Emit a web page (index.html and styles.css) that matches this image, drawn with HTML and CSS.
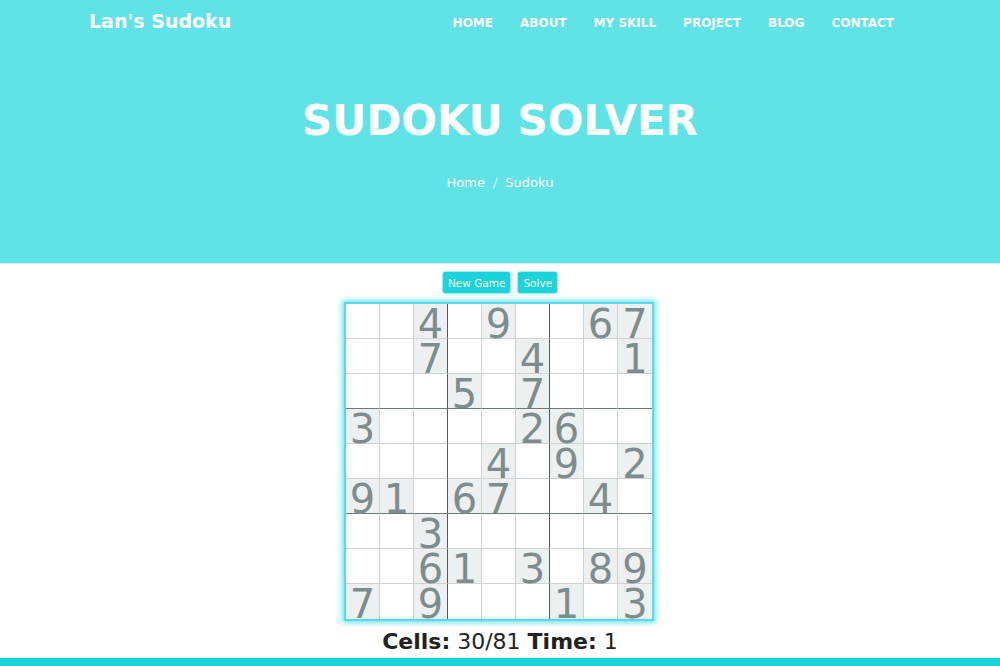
FILE: index.html
```html
<!DOCTYPE html>
<html>
<head>
<meta charset="utf-8">
<title>Lan's Sudoku</title>
<link rel="stylesheet" href="styles.css">
</head>
<body>
<header class="hero">
  <nav class="navbar">
    <div class="brand">Lan's Sudoku</div>
    <ul class="menu">
      <li><a href="#">HOME</a></li>
      <li><a href="#">ABOUT</a></li>
      <li><a href="#">MY SKILL</a></li>
      <li><a href="#">PROJECT</a></li>
      <li><a href="#">BLOG</a></li>
      <li><a href="#">CONTACT</a></li>
    </ul>
  </nav>
  <h1 class="title">SUDOKU SOLVER</h1>
  <div class="crumbs"><span>Home</span><span class="sep">/</span><span>Sudoku</span></div>
</header>
<main class="game">
  <div class="actions">
    <button class="btn">New Game</button>
    <button class="btn">Solve</button>
  </div>
  <div class="board" id="board"></div>
  <div class="stats"><b>Cells:</b> 30/81 <b>Time:</b> 1</div>
</main>
<div class="footer-bar"></div>
<script>
var rows = [
  "..4.9..67",
  "..7..4..1",
  "...5.7...",
  "3....26..",
  "....4.9.2",
  "91.67..4.",
  "..3......",
  "..61.3.89",
  "7.9...1.3"
];
var board = document.getElementById('board');
rows.forEach(function (r, ri) {
  r.split('').forEach(function (ch, ci) {
    var c = document.createElement('div');
    c.className = 'cell';
    if (ci === 2 || ci === 5) c.className += ' bx';
    if (ci === 8) c.className += ' lastc';
    if (ri === 2 || ri === 5) c.className += ' by';
    if (ri === 8) c.className += ' lastr';
    if (ch !== '.') { c.className += ' given'; c.textContent = ch; }
    board.appendChild(c);
  });
});
</script>
</body>
</html>
```
FILE: styles.css
```css
html, body {
  margin: 0;
  padding: 0;
  background: #ffffff;
  font-family: "DejaVu Sans", Verdana, sans-serif;
}
.hero {
  background: #60e3e6;
  height: 264px;
  border-bottom: 1px solid #c9f4f6;
  box-sizing: border-box;
}
.navbar {
  width: 822px;
  margin: 0 auto;
  height: 42px;
  display: flex;
  align-items: center;
  justify-content: space-between;
}
.brand {
  color: #fff;
  font-weight: bold;
  font-size: 19px;
}
.menu {
  list-style: none;
  margin: 0;
  padding: 0;
  display: flex;
  gap: 27px;
  margin-right: 17px;
}
.menu a {
  color: #fff;
  text-decoration: none;
  font-weight: bold;
  font-size: 12px;
}
.title {
  margin: 54px 0 0 0;
  text-align: center;
  color: #fff;
  font-size: 42px;
  font-weight: bold;
  line-height: 50px;
}
.crumbs {
  margin-top: 29px;
  text-align: center;
  color: #fff;
  font-size: 13px;
}
.crumbs .sep {
  color: #d9f8f9;
  margin: 0 8px;
}
.game {
  display: flex;
  flex-direction: column;
  align-items: center;
  padding-top: 7px;
}
.actions {
  display: flex;
  gap: 6px;
  margin-bottom: 8px;
}
.btn {
  background: #1bd3da;
  color: #fff;
  border: 1px solid #a8eef1;
  border-radius: 3px;
  height: 23px;
  padding: 0 5px;
  font-family: "DejaVu Sans", Verdana, sans-serif;
  font-size: 10.5px;
}
.board {
  display: grid;
  grid-template-columns: repeat(9, 34px);
  grid-auto-rows: 35px;
  border: 2px solid #5bd9e6;
  box-shadow: 0 0 5px 2px #6fe6f0;
  margin-left: -2px;
}
.cell {
  box-sizing: border-box;
  border-right: 1px solid #cfd3d3;
  border-bottom: 1px solid #cfd3d3;
  height: 35px;
  text-align: center;
  font-size: 40px;
  line-height: 41px;
  color: #7f8c8d;
}
.cell.bx { border-right-color: #555b5c; }
.cell.by { border-bottom-color: #6c7778; }
.cell.lastc { border-right: none; }
.cell.lastr { border-bottom: none; }
.cell.given { background: #ecf0f1; }
.stats {
  margin-top: 7px;
  font-size: 22px;
  color: #222;
  line-height: 28px;
}
.footer-bar {
  position: fixed;
  left: 0;
  right: 0;
  bottom: 0;
  height: 8px;
  background: #1bd3da;
}
```
